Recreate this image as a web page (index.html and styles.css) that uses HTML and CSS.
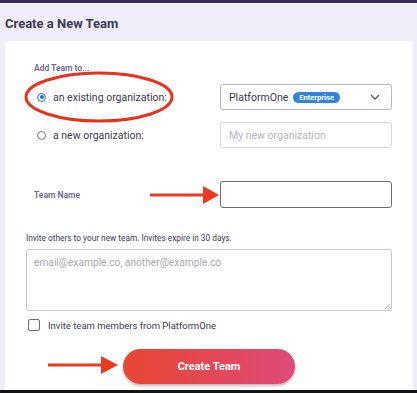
FILE: index.html
```html
<!DOCTYPE html>
<html>
<head>
<meta charset="utf-8">
<link rel="stylesheet" href="styles.css">
</head>
<body>
<div class="topbar"></div>
<h1 class="title">Create a New Team</h1>
<div class="card">
  <div class="label add-label">Add Team to...</div>
  <div class="row org-row">
    <label class="radio-label"><span class="radio checked"></span>an existing organization:</label>
    <div class="field select">
      <span class="select-text">PlatformOne</span>
      <span class="badge">Enterprise</span>
      <svg class="chevron" width="10" height="6" viewBox="0 0 10 6"><path d="M1 1 L5 5 L9 1" fill="none" stroke="#5c5a70" stroke-width="1.4"/></svg>
    </div>
  </div>
  <div class="row org-row second">
    <label class="radio-label"><span class="radio"></span>a new organization:</label>
    <div class="field placeholder">My new organization</div>
  </div>
  <div class="row name-row">
    <div class="label name-label">Team Name</div>
    <div class="field name-input"></div>
  </div>
  <div class="invite-text">Invite others to your new team. Invites expire in 30 days.</div>
  <div class="textarea">
    <span class="ta-placeholder">email@example.co, another@example.co</span>
    <svg class="resize" width="6" height="6" viewBox="0 0 6 6"><path d="M6 1 L1 6 M6 4 L4 6" stroke="#9d9bab" stroke-width="0.8"/></svg>
  </div>
  <label class="check-row"><span class="checkbox"></span>Invite team members from PlatformOne</label>
  <div class="button-row">
    <button class="create">Create Team</button>
  </div>
</div>
<div class="bottombar"></div>
<svg class="annotations" width="417" height="393" viewBox="0 0 417 393">
  <ellipse cx="99" cy="97" rx="73" ry="24" fill="none" stroke="#e8321c" stroke-width="3"/>
  <path d="M150 195 H205" stroke="#ec3a1f" stroke-width="3"/>
  <path d="M203 186 L219 195 L203 204 Z" fill="#ec3a1f"/>
  <path d="M48 365 H103" stroke="#ec3a1f" stroke-width="3"/>
  <path d="M101 356 L118 365 L101 374 Z" fill="#ec3a1f"/>
</svg>
</body>
</html>
```
FILE: styles.css
```css
html, body {
  margin: 0;
  padding: 0;
}
body {
  width: 417px;
  height: 393px;
  overflow: hidden;
  background: #efeef8;
  font-family: Roboto, "Noto Sans", sans-serif;
  color: #3b3852;
  position: relative;
}
.topbar {
  height: 3px;
  background: #3b2b62;
  border-bottom: 1px solid #ffffff;
}
.title {
  margin: 0;
  padding: 11px 0 0 5px;
  height: 26px;
  font-size: 13px;
  font-weight: 700;
  color: #3d3a56;
  line-height: 18px;
}
.card {
  margin-left: 5px;
  width: 408px;
  background: #ffffff;
  border-radius: 3px 3px 0 0;
  box-sizing: border-box;
  padding: 20px 21px 0 21px;
  height: 360px;
}
.label {
  font-size: 8.5px;
  font-weight: 600;
  color: #6c6983;
}
.add-label {
  padding-left: 8px;
  line-height: 14px;
}
.row {
  display: grid;
  grid-template-columns: 1fr 172px;
  align-items: center;
}
.org-row {
  margin-top: 9px;
}
.org-row.second {
  margin-top: 12px;
}
.radio-label {
  display: flex;
  align-items: center;
  gap: 7px;
  padding-left: 11px;
  font-size: 10.5px;
  color: #3d3a56;
}
.radio {
  width: 9px;
  height: 9px;
  border-radius: 50%;
  border: 1px solid #77758a;
  box-sizing: border-box;
  background: #fff;
  position: relative;
}
.radio.checked {
  border-color: #1f6fd6;
  border-width: 1px;
  background: #fff;
}
.radio.checked::after {
  content: "";
  position: absolute;
  left: 1.5px;
  top: 1.5px;
  width: 4px;
  height: 4px;
  border-radius: 50%;
  background: #1f6fd6;
}
.field {
  height: 26px;
  box-sizing: border-box;
  border: 1px solid #d6d4e3;
  border-radius: 3px;
  display: flex;
  align-items: center;
  padding: 0 8px;
  font-size: 10.5px;
}
.select {
  border-color: #b9b7cc;
}
.select-text {
  color: #3d3a56;
}
.badge {
  margin-left: 5px;
  background: #2f85dd;
  color: #fff;
  font-size: 7.5px;
  font-weight: 700;
  border-radius: 6px;
  padding: 0 6px;
  line-height: 11px;
  height: 11px;
}
.chevron {
  margin-left: auto;
  margin-right: 3px;
}
.placeholder {
  color: #b6b4c4;
}
.name-row {
  margin-top: 33px;
}
.name-label {
  padding-left: 8px;
}
.name-input {
  height: 27px;
  border-color: #6e6c80;
}
.invite-text {
  margin-top: 25px;
  font-size: 8.3px;
  color: #3d3a56;
  line-height: 10px;
}
.textarea {
  margin-top: 6px;
  height: 62px;
  border: 1px solid #c8c6d8;
  border-radius: 3px;
  box-sizing: border-box;
  padding: 7px 7px;
  position: relative;
  font-size: 10.2px;
}
.ta-placeholder {
  color: #a9a7b7;
}
.resize {
  position: absolute;
  right: 1px;
  bottom: 1px;
}
.check-row {
  margin-top: 8px;
  display: flex;
  align-items: center;
  gap: 8px;
  padding-left: 2px;
  font-size: 9.5px;
  color: #3d3a56;
}
.checkbox {
  width: 12px;
  height: 12px;
  box-sizing: border-box;
  border: 1.5px solid #6e6c80;
  border-radius: 2px;
}
.button-row {
  margin-top: 18px;
  padding-left: 97px;
}
.create {
  width: 172px;
  height: 35px;
  border: none;
  border-radius: 18px;
  background: linear-gradient(90deg, #e84733 0%, #e34858 55%, #dd4b7a 100%);
  color: #fff;
  font-family: inherit;
  font-size: 11px;
  font-weight: 700;
  box-shadow: 0 2px 3px rgba(60, 20, 30, 0.3);
}
.bottombar {
  position: absolute;
  left: 0;
  bottom: 0;
  width: 417px;
  height: 3px;
  background: #141414;
}
.annotations {
  position: absolute;
  left: 0;
  top: 0;
  pointer-events: none;
}
```
